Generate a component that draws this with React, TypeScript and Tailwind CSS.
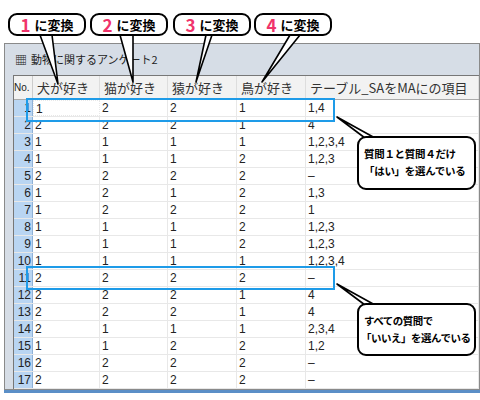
import * as React from 'react';

const rows: string[][] = [
  ['1', '2', '2', '1', '1,4'],
  ['2', '2', '2', '1', '4'],
  ['1', '1', '1', '1', '1,2,3,4'],
  ['1', '1', '1', '2', '1,2,3'],
  ['2', '2', '2', '2', '–'],
  ['1', '2', '1', '2', '1,3'],
  ['1', '2', '2', '2', '1'],
  ['1', '1', '1', '2', '1,2,3'],
  ['1', '1', '1', '2', '1,2,3'],
  ['1', '1', '1', '1', '1,2,3,4'],
  ['2', '2', '2', '2', '–'],
  ['2', '2', '2', '1', '4'],
  ['2', '2', '2', '1', '4'],
  ['2', '1', '1', '1', '2,3,4'],
  ['1', '1', '2', '2', '1,2'],
  ['2', '2', '2', '2', '–'],
  ['2', '2', '2', '2', '–'],
];

const heads = ['犬が好き', '猫が好き', '猿が好き', '鳥が好き', 'テーブル_SAをMAにの項目'];
const widths = ['w-[67px]', 'w-[68px]', 'w-[69px]', 'w-[69px]', 'flex-1'];

const Callout: React.FC<{ n: string; x: string }> = ({ n, x }) => (
  <div className={`absolute top-[13px] ${x} w-[78px] h-[23px] bg-white border-2 border-black rounded-[9px] flex items-center justify-center gap-1 text-[13px] font-bold`}>
    <span className="text-[#f0336b] text-[17px]">{n}</span>
    <span>に変換</span>
  </div>
);

export default function App() {
  return (
    <div className="relative w-[480px] h-[400px] bg-white overflow-hidden" style={{ fontFamily: '"Noto Sans CJK JP", "Liberation Sans", sans-serif' }}>
      <div className="h-[43px]" />
      {/* window */}
      <div className="ml-[4px] h-[347px] border border-[#8a8a8a] bg-[#d6dde6] pl-[8px] flex flex-col">
        <div className="h-[31px] flex items-center gap-1 text-[11px] text-[#222] pl-[2px]">
          <span className="text-[12px]">▦</span>
          <span>動物に関するアンケート2</span>
        </div>
        <div className="flex-1 bg-white border-l border-t border-[#777] text-[11px] text-[#222] flex flex-col" style={{ fontFamily: '"Liberation Sans", "Noto Sans CJK JP", sans-serif' }}>
          <div className="flex h-[24px] bg-[#f2f2f2] border-b border-[#aaa]">
            <div className="w-[19px] border-r border-[#ccc] text-[10px] flex items-center">No.</div>
            {heads.map((h, i) => (
              <div key={i} className={`${widths[i]} border-r border-[#ddd] flex items-center pl-[4px] text-[13px] text-[#333]`} style={{ fontFamily: '"Noto Sans CJK JP", sans-serif' }}>{h}</div>
            ))}
          </div>
          {rows.map((r, i) => (
            <div key={i} className="flex h-[17px] border-b border-[#e8e8e8]">
              <div className="w-[19px] bg-[#b9d5f2] border-r border-[#8fb1d6] text-[12px] text-right pr-[1px] leading-[17px]">{i + 1}</div>
              {r.map((c, j) => (
                <div key={j} className={`${widths[j]} border-r border-[#e8e8e8] pl-[2px] text-[12px] leading-[17px] ${i === 0 && j === 0 ? 'border border-dotted border-[#666]' : ''}`}>{c}</div>
              ))}
            </div>
          ))}
        </div>
      </div>
      <div className="h-[3px] bg-[#5b8fc7] ml-[4px]" />

      {/* highlight boxes */}
      <div className="absolute left-[26px] top-[98px] w-[309px] h-[24px] border-2 border-[#1e9be8]" />
      <div className="absolute left-[26px] top-[266px] w-[309px] h-[24px] border-2 border-[#1e9be8]" />

      <svg className="absolute inset-0" width="480" height="400">
        <g fill="white" stroke="black" strokeWidth="1.6" strokeLinejoin="round">
          <polyline points="40,35 58,84 52,35" />
          <polyline points="120,35 133,82 133,35" />
          <polyline points="206,35 196,82 212,35" />
          <polyline points="290,35 262,82 300,35" />
          <polyline points="365,138 337,117 375,138" />
          <polyline points="365,305 337,284 375,305" />
        </g>
      </svg>
      <Callout n="1" x="left-[8px]" />
      <Callout n="2" x="left-[90px]" />
      <Callout n="3" x="left-[173px]" />
      <Callout n="4" x="left-[254px]" />

      <div className="absolute left-[357px] top-[136px] w-[119px] h-[54px] bg-white border-2 border-black rounded-[9px] px-[5px] py-[7px] text-[10.5px] font-bold leading-[17px] whitespace-nowrap tracking-[-0.3px]">
        <div>質問１と質問４だけ</div>
        <div>「はい」を選んでいる</div>
      </div>
      <div className="absolute left-[357px] top-[303px] w-[119px] h-[53px] bg-white border-2 border-black rounded-[9px] px-[2px] py-[7px] text-[10.5px] font-bold leading-[17px] whitespace-nowrap tracking-[-0.5px]">
        <div className="pl-[3px]">すべての質問で</div>
        <div>「いいえ」を選んでいる</div>
      </div>
    </div>
  );
}
